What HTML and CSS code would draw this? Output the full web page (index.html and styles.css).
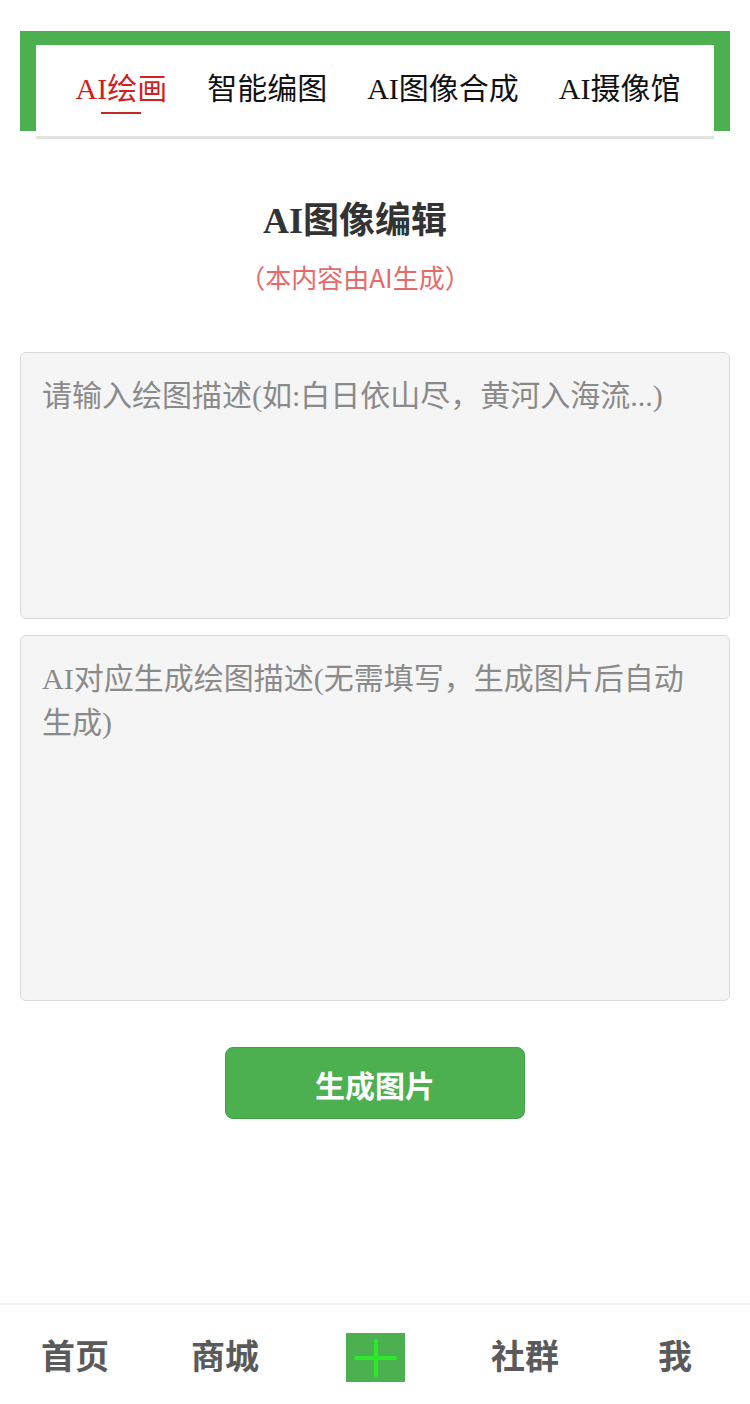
FILE: index.html
```html
<!DOCTYPE html>
<html lang="zh-CN">
<head>
  <meta charset="UTF-8" />
  <meta name="viewport" content="width=device-width, initial-scale=1.0"/>
  <title>AI图像编辑</title>
  <link rel="stylesheet" href="styles.css">
</head>
<body>

<main class="page">
  <div class="tab-frame">
    <nav class="tabs">
      <a class="tab active">AI绘画</a>
      <a class="tab">智能编图</a>
      <a class="tab">AI图像合成</a>
      <a class="tab">AI摄像馆</a>
    </nav>
  </div>

  <h1 class="title">AI图像编辑</h1>
  <p class="subtitle">（本内容由AI生成）</p>

  <textarea class="prompt" placeholder="请输入绘图描述(如:白日依山尽，黄河入海流...)"></textarea>
  <textarea class="prompt prompt-tall" placeholder="AI对应生成绘图描述(无需填写，生成图片后自动生成)" readonly></textarea>

  <div class="actions">
    <button class="btn-generate">生成图片</button>
  </div>
</main>

<footer class="bottom-nav">
  <a class="nav-item">首页</a>
  <a class="nav-item">商城</a>
  <a class="nav-item"><span class="plus"></span></a>
  <a class="nav-item">社群</a>
  <a class="nav-item">我</a>
</footer>

</body>
</html>
```

FILE: styles.css
```css
html, body {
  margin: 0;
  height: 100%;
}

body {
  font-family: "Liberation Serif", "Noto Sans CJK SC", serif;
  background: #fff;
  color: #333;
  display: flex;
  flex-direction: column;
  min-height: 100vh;
}

.page {
  flex: 1;
  padding: 31px 20px 0;
}

.tab-frame {
  background: #4caf50;
  height: 100px;
  box-sizing: border-box;
  padding: 14px 16px 0;
}

.tabs {
  background: #fff;
  height: 67px;
  border-bottom: 3px solid #e2e2e2;
  display: flex;
  justify-content: center;
  gap: 40px;
  padding: 24px 0 0 6px;
}

.tab {
  font-size: 30px;
  line-height: 40px;
  color: #111;
  display: flex;
  flex-direction: column;
  align-items: center;
}

.tab.active {
  color: #d21f1f;
}

.tab.active::after {
  content: "";
  width: 40px;
  height: 2px;
  margin-top: 3px;
  background: #c42a2a;
}

.title,
.subtitle {
  padding-right: 40px;
  text-align: center;
}

.title {
  margin: 68px 0 0;
  font-size: 36px;
  line-height: 44px;
  font-weight: bold;
  color: #333;
}

.subtitle {
  margin: 17px 0 0;
  font-family: "Noto Sans CJK SC", sans-serif;
  font-size: 26px;
  line-height: 34px;
  color: #e66a6a;
}

.prompt {
  display: block;
  width: 100%;
  height: 267px;
  box-sizing: border-box;
  margin: 58px 0 0;
  padding: 21px;
  border: 1px solid #dadada;
  border-radius: 6px;
  background: #f5f5f5;
  font-family: "Liberation Serif", "Noto Sans CJK SC", serif;
  font-size: 30px;
  line-height: 44px;
  color: #333;
  resize: none;
  outline: none;
}

.prompt::placeholder {
  color: #8a8a8a;
}

.prompt-tall {
  height: 366px;
  margin-top: 16px;
}

.actions {
  display: flex;
  justify-content: center;
  margin-top: 46px;
}

.btn-generate {
  width: 300px;
  height: 72px;
  padding-top: 3px;
  border: 1px solid #43a047;
  border-radius: 8px;
  background: #4caf50;
  color: #fff;
  font-family: "Noto Sans CJK SC", sans-serif;
  font-size: 30px;
  font-weight: bold;
  cursor: pointer;
}

.bottom-nav {
  height: 101px;
  border-top: 2px solid #f3f3f3;
  box-sizing: border-box;
  display: grid;
  grid-template-columns: repeat(5, 1fr);
  align-items: center;
}

.nav-item {
  font-family: "Noto Sans CJK SC", sans-serif;
  font-size: 34px;
  font-weight: bold;
  color: #5a5a5a;
  display: flex;
  justify-content: center;
  align-items: center;
}

.plus {
  width: 59px;
  height: 49px;
  margin-top: 6px;
  background: #4caf50;
  position: relative;
}

.plus::before,
.plus::after {
  content: "";
  position: absolute;
  background: #2bea2b;
  border-radius: 2px;
}

.plus::before {
  left: 8px;
  right: 8px;
  top: 23px;
  height: 4px;
}

.plus::after {
  top: 6px;
  bottom: 5px;
  left: 28px;
  width: 4px;
}
```
